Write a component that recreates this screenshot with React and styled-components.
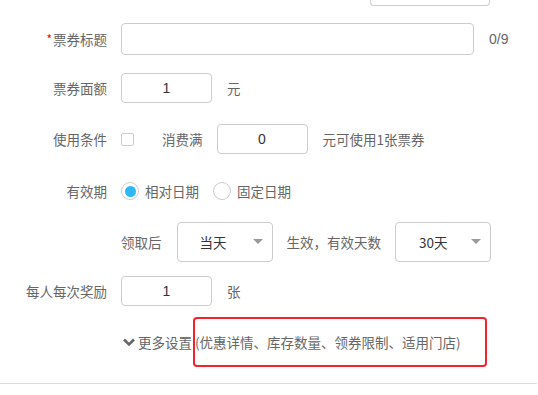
import React from 'react';
import styled, { createGlobalStyle } from 'styled-components';

const GlobalStyle = createGlobalStyle`
  html, body {
    margin: 0;
    padding: 0;
    background: #fff;
  }
  body {
    font-family: "Noto Sans CJK SC", "Liberation Sans", sans-serif;
    font-size: 13.5px;
    color: #666;
  }
`;

const Page = styled.div`
  width: 538px;
  height: 395px;
  overflow: hidden;
  display: flex;
  flex-direction: column;
`;

const Row = styled.div`
  display: flex;
  align-items: center;
  height: ${({ h }) => h}px;
  margin-top: ${({ mt }) => mt}px;
`;

const Label = styled.div`
  width: 107px;
  padding-right: 14px;
  text-align: right;
  flex-shrink: 0;
  color: #666;
  white-space: nowrap;
`;

const Required = styled.span`
  color: #f00;
  margin-right: 1px;
  font-size: 12px;
  vertical-align: 1px;
`;

const Box = styled.div`
  box-sizing: border-box;
  width: ${({ w }) => w}px;
  height: 100%;
  margin-left: ${({ ml }) => ml || 0}px;
  border: 1px solid #ccc;
  border-radius: 4px;
  display: flex;
  align-items: center;
  justify-content: center;
  color: #333;
  font-family: "Liberation Sans", "Noto Sans CJK SC", sans-serif;
  font-size: 14px;
  flex-shrink: 0;
`;

const CutBox = styled(Box)`
  margin-left: 370px;
  border-top: none;
  border-radius: 0 0 4px 4px;
`;

const Text = styled.span`
  margin-left: ${({ ml }) => ml || 0}px;
  color: #666;
  white-space: nowrap;
`;

const Counter = styled.span`
  margin-left: 15px;
  font-family: "Liberation Sans", sans-serif;
  font-size: 14px;
  color: #666;
`;

const Checkbox = styled.span`
  box-sizing: border-box;
  width: 13px;
  height: 13px;
  border: 1px solid #ccc;
  border-radius: 2px;
  flex-shrink: 0;
`;

const Radio = styled.span`
  box-sizing: border-box;
  width: 18px;
  height: 18px;
  border: 1px solid #ccc;
  border-radius: 50%;
  margin-left: ${({ ml }) => ml || 0}px;
  display: flex;
  align-items: center;
  justify-content: center;
  flex-shrink: 0;

  &::after {
    content: '';
    display: ${({ checked }) => (checked ? 'block' : 'none')};
    width: 11px;
    height: 11px;
    border-radius: 50%;
    background: #2db7f5;
  }
`;

const Select = styled(Box)`
  justify-content: flex-start;
  padding-left: ${({ pl }) => pl}px;
  position: relative;
  font-family: "Noto Sans CJK SC", "Liberation Sans", sans-serif;
  font-size: 13.5px;
`;

const Caret = styled.span`
  position: absolute;
  right: 9px;
  top: 16px;
  width: 0;
  height: 0;
  border-left: 5px solid transparent;
  border-right: 5px solid transparent;
  border-top: 5px solid #999;
`;

const Indent = styled.div`
  width: 121px;
  flex-shrink: 0;
`;

const MoreToggle = styled.div`
  display: flex;
  align-items: center;
  margin-left: 123px;
  height: 100%;
  color: #666;
`;

const Chevron = styled.svg`
  width: 12px;
  height: 10px;
  margin-right: 3px;
`;

const Highlight = styled.div`
  box-sizing: border-box;
  height: 100%;
  width: 294px;
  margin-left: 1px;
  border: 2px solid #f5222d;
  border-radius: 4px;
  display: flex;
  align-items: center;
  color: #666;
  white-space: nowrap;
`;

const Divider = styled.div`
  height: 1px;
  margin-top: 16px;
  width: 537px;
  background: #d9dcdc;
`;

export default function App() {
  return (
    <Page>
      <GlobalStyle />
      <Row h={6} mt={0}>
        <CutBox w={120} />
      </Row>

      <Row h={32} mt={17}>
        <Label><Required>*</Required>票券标题</Label>
        <Box w={353} />
        <Counter>0/9</Counter>
      </Row>

      <Row h={30} mt={18}>
        <Label>票券面额</Label>
        <Box w={91}>1</Box>
        <Text ml={15}>元</Text>
      </Row>

      <Row h={30} mt={21}>
        <Label>使用条件</Label>
        <Checkbox />
        <Text ml={28}>消费满</Text>
        <Box w={91} ml={14}>0</Box>
        <Text ml={15}>元可使用1张票券</Text>
      </Row>

      <Row h={30} mt={22}>
        <Label>有效期</Label>
        <Radio checked />
        <Text ml={6}>相对日期</Text>
        <Radio ml={14} />
        <Text ml={6}>固定日期</Text>
      </Row>

      <Row h={40} mt={16}>
        <Indent />
        <Text>领取后</Text>
        <Select w={96} pl={22} ml={15}>当天<Caret /></Select>
        <Text ml={14}>生效，有效天数</Text>
        <Select w={96} pl={23} ml={14}>30天<Caret /></Select>
      </Row>

      <Row h={30} mt={14}>
        <Label>每人每次奖励</Label>
        <Box w={91}>1</Box>
        <Text ml={15}>张</Text>
      </Row>

      <Row h={50} mt={11}>
        <MoreToggle>
          <Chevron viewBox="0 0 12 10">
            <path d="M1 2.5 L6 7.5 L11 2.5" fill="none" stroke="#666" strokeWidth="2.6" />
          </Chevron>
          更多设置
        </MoreToggle>
        <Highlight>(优惠详情、库存数量、领券限制、适用门店)</Highlight>
      </Row>

      <Divider />
    </Page>
  );
}
